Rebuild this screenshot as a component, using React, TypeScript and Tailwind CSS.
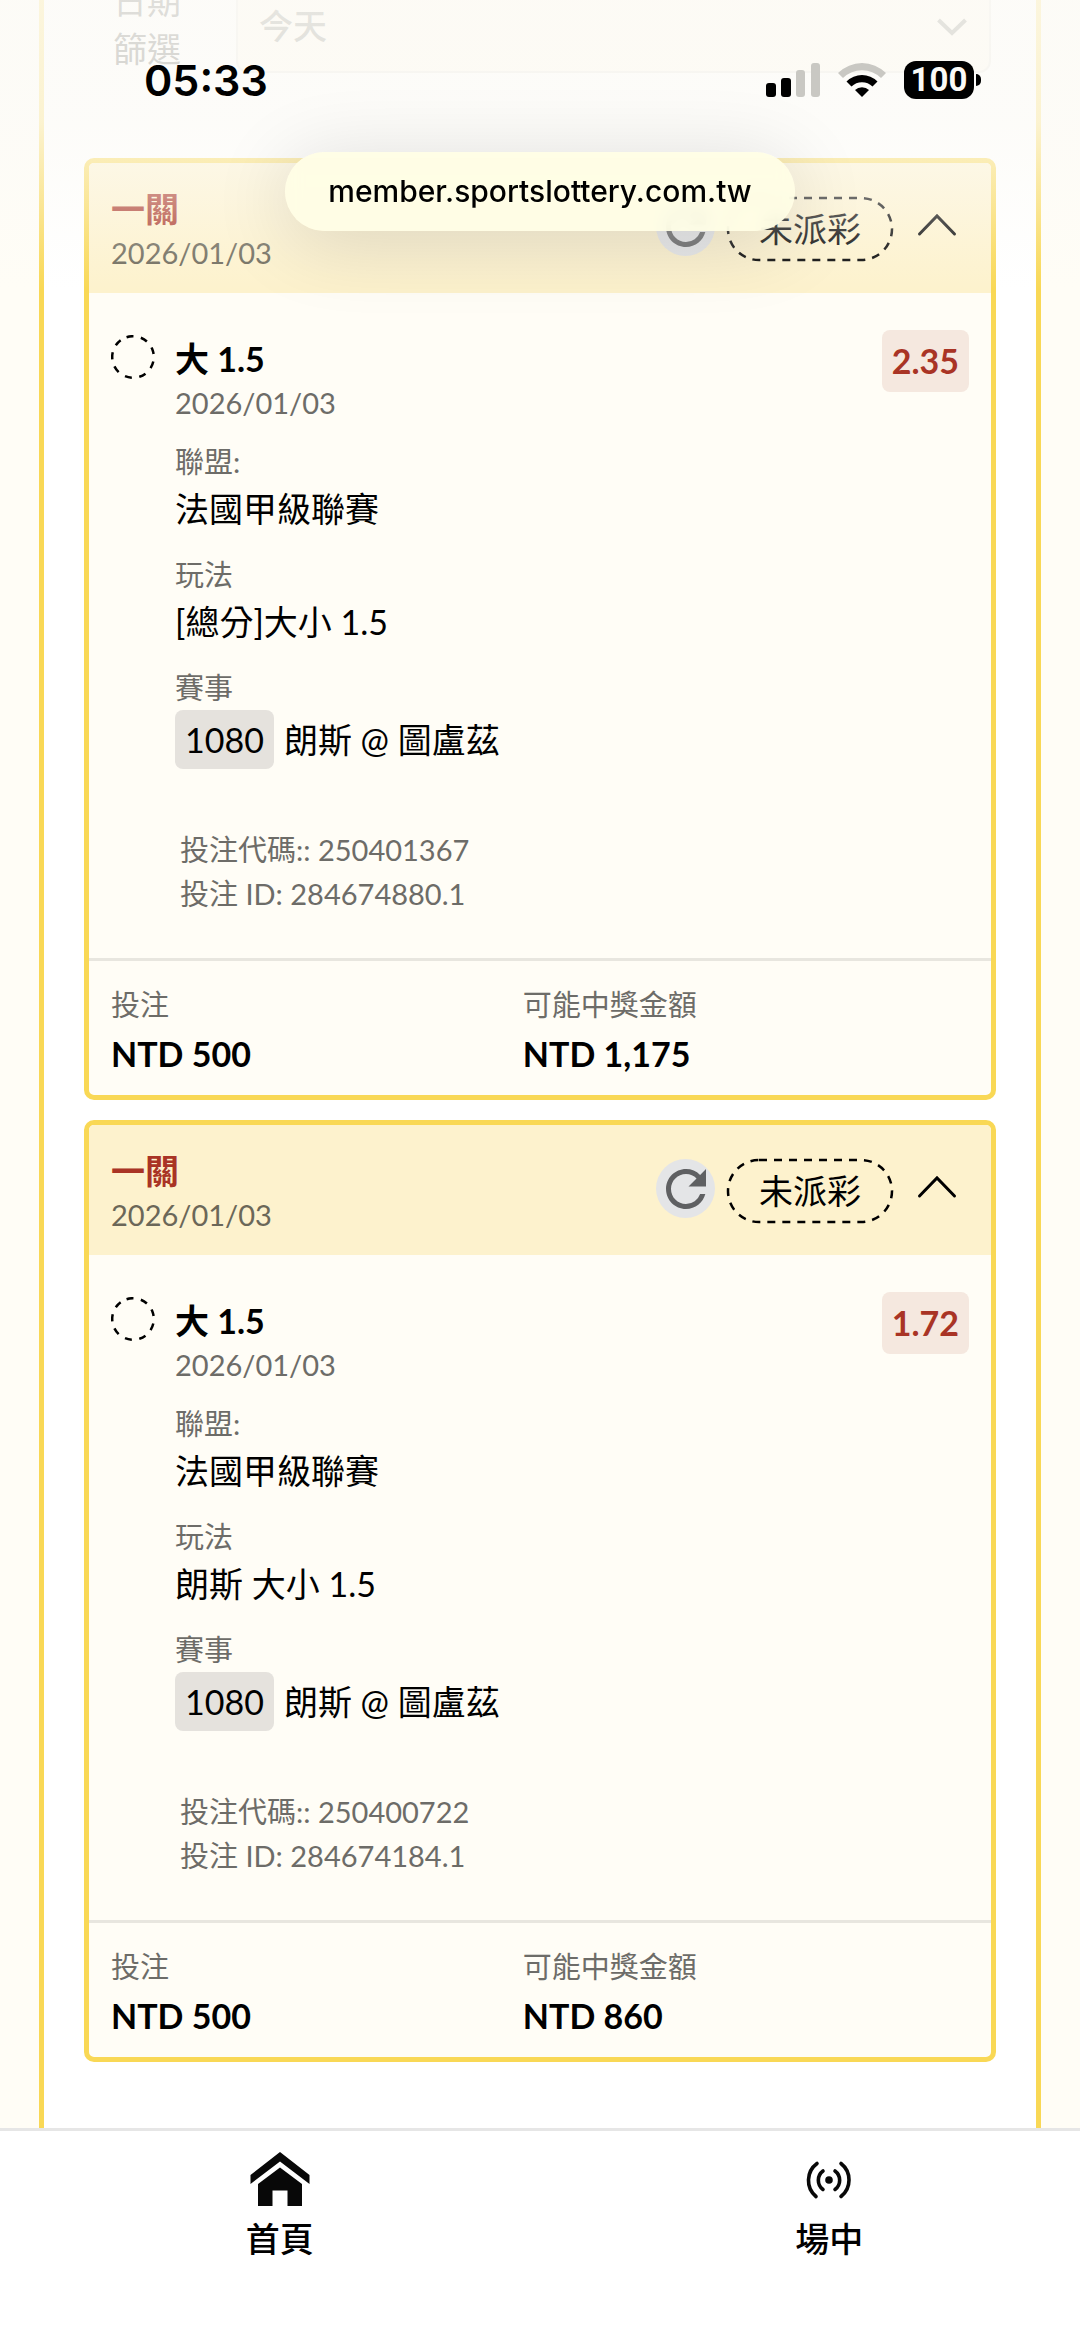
import { useState, type ReactNode } from 'react'
import { MdRefresh } from 'react-icons/md'

interface Bet {
  title: string
  date: string
  status: string
  selection: string
  odds: string
  league: string
  market: string
  matchNo: string
  match: string
  code: string
  id: string
  stake: string
  payout: string
}

const bets: Bet[] = [
  {
    title: '一關',
    date: '2026/01/03',
    status: '未派彩',
    selection: '大 1.5',
    odds: '2.35',
    league: '法國甲級聯賽',
    market: '[總分]大小 1.5',
    matchNo: '1080',
    match: '朗斯 @ 圖盧茲',
    code: '250401367',
    id: '284674880.1',
    stake: 'NTD 500',
    payout: 'NTD 1,175',
  },
  {
    title: '一關',
    date: '2026/01/03',
    status: '未派彩',
    selection: '大 1.5',
    odds: '1.72',
    league: '法國甲級聯賽',
    market: '朗斯 大小 1.5',
    matchNo: '1080',
    match: '朗斯 @ 圖盧茲',
    code: '250400722',
    id: '284674184.1',
    stake: 'NTD 500',
    payout: 'NTD 860',
  },
]

// Phone status bar, drawn over content that fades out towards the top
const StatusBar = () => (
  <div className="pointer-events-none absolute inset-x-0 top-0 h-[290px] bg-[linear-gradient(180deg,rgba(252,251,247,0.84)_0%,rgba(252,251,247,0.76)_42%,rgba(252,251,247,0.6)_55%,rgba(252,251,247,0.38)_72%,rgba(252,251,247,0.18)_86%,rgba(252,251,247,0)_100%)]">
    <div className="flex items-center justify-between pt-[54px] pr-[99px] pl-36 font-['Inter',sans-serif]">
      <span className="text-[43px] leading-[52px] font-semibold text-black">05:33</span>
      <div className="flex items-center gap-[18px]">
        <svg className="h-[34px] w-[54px]" viewBox="0 0 54 34">
          <rect x="0" y="20" width="10" height="14" rx="3" />
          <rect x="15" y="15" width="10" height="19" rx="3" />
          <rect x="30" y="7" width="9" height="27" rx="3" fill="#c9c8c3" />
          <rect x="45" y="0" width="9" height="34" rx="3" fill="#c9c8c3" />
        </svg>
        <svg className="h-[34px] w-[48px]" viewBox="0 0 48 34">
          <path d="M0 10 A34 34 0 0 1 48 10 L43 15 A27 27 0 0 0 5 15 Z" fill="#c9c8c3" />
          <path d="M8.5 18.5 A22 22 0 0 1 39.5 18.5 L34.5 23.5 A15 15 0 0 0 13.5 23.5 Z" />
          <path d="M17 27 A10 10 0 0 1 31 27 L24 34 Z" />
        </svg>
        <div className="flex items-center gap-[2px]">
          <div className="flex h-[38px] w-[70px] items-center justify-center rounded-xl bg-black font-['Roboto',sans-serif] text-[33px] font-bold text-[#fbfaf6]">
            100
          </div>
          <div className="h-3 w-[5px] rounded-r-full bg-black" />
        </div>
      </div>
    </div>
  </div>
)

const AddressPill = () => (
  <div className="absolute inset-x-0 top-[152px] flex justify-center">
    <div className="flex h-[79px] items-center rounded-full bg-[#fffee6]/90 px-[43px] font-['Inter',sans-serif] text-[30px] font-medium text-black shadow-[0_10px_80px_rgba(0,0,0,0.14)] backdrop-blur-sm">
      member.sportslottery.com.tw
    </div>
  </div>
)

const DateFilter = () => (
  <div className="-mt-[23px] flex items-center pr-[45px] pl-[69px]">
    <label htmlFor="date-filter" className="w-[123px] text-[34px] leading-[48px] text-[#4b4b46]">
      日期
      <br />
      篩選
    </label>
    <div className="relative flex-1">
      <select
        id="date-filter"
        className="h-24 w-full appearance-none rounded-xl border-2 border-[#e6e3dc] bg-[#fff9ec] px-[21px] text-[34px] font-medium text-[#77776c]"
      >
        <option>今天</option>
      </select>
      <svg
        className="pointer-events-none absolute top-[41px] right-6 h-[18px] w-[30px]"
        viewBox="0 0 30 18"
        fill="none"
        stroke="#77776c"
        strokeWidth="4"
      >
        <path d="M1.5 2 L15 15 L28.5 2" />
      </svg>
    </div>
  </div>
)

const Field = ({ label, children }: { label: string; children: ReactNode }) => (
  <div>
    <dt className="text-[29px] leading-[44px] text-[#6d6c68]">{label}</dt>
    <dd className="text-[34px] leading-[50px] text-black">{children}</dd>
  </div>
)

const BetCard = ({ bet }: { bet: Bet }) => {
  const [open, setOpen] = useState(true)

  return (
    <article className="overflow-hidden rounded-[10px] border-[5px] border-[#f9d855] bg-[#fffdf6]">
      <header className="flex items-start justify-between bg-[#fdf2cd] pt-6 pr-[34px] pb-[18px] pl-[22px]">
        <div className="leading-[44px]">
          <h2 className="text-[34px] font-bold text-[#a93425]">{bet.title}</h2>
          <p className="text-[29px] text-[#6b6758]">{bet.date}</p>
        </div>
        <div className="flex items-start pt-[10px]">
          <button
            type="button"
            aria-label="重新整理"
            className="flex size-[59px] items-center justify-center rounded-full bg-[#e4e5e7] text-[#5f6062]"
          >
            <MdRefresh className="size-[60px] shrink-0" />
          </button>
          <span className="relative ml-3 px-8 text-[34px] leading-[64px] text-black">
            <svg className="absolute inset-0 h-full w-full overflow-visible" fill="none">
              <rect
                x="1"
                y="1"
                width="98.8%"
                height="97%"
                rx="31"
                stroke="#000"
                strokeWidth="2.5"
                strokeDasharray="8 7"
              />
            </svg>
            {bet.status}
          </span>
          <button
            type="button"
            aria-expanded={open}
            aria-label="展開"
            onClick={() => setOpen(!open)}
            className="mt-4 ml-6"
          >
            <svg
              className={open ? 'h-6 w-10' : 'h-6 w-10 rotate-180'}
              viewBox="0 0 40 24"
              fill="none"
              stroke="#000"
              strokeWidth="3"
              strokeLinecap="round"
            >
              <path d="M2.5 21 L20 3 L37.5 21" />
            </svg>
          </button>
        </div>
      </header>

      {open && (
        <div className="flex items-start px-[22px] pt-[37px] pb-[42px]">
          <svg className="mt-[5px] mr-5 size-11 shrink-0" viewBox="0 0 44 44" fill="none">
            <circle
              cx="22"
              cy="22"
              r="20.8"
              stroke="#000"
              strokeWidth="2.5"
              strokeDasharray="7 7.52"
              transform="rotate(-108 22 22)"
            />
          </svg>
          <div className="flex-1 pt-[7px]">
            <h3 className="text-[34px] leading-[44px] font-bold text-black">{bet.selection}</h3>
            <p className="text-[29px] leading-[44px] text-[#6d6c68]">{bet.date}</p>
            <dl className="mt-[15px] flex flex-col gap-[19px]">
              <Field label="聯盟:">{bet.league}</Field>
              <Field label="玩法">{bet.market}</Field>
              <Field label="賽事">
                <span className="flex items-center gap-[10px]">
                  <span className="rounded-lg bg-[#e5e2dd] px-[10px] leading-[59px]">{bet.matchNo}</span>
                  {bet.match}
                </span>
              </Field>
            </dl>
            <div className="mt-[59px] pl-[5px] text-[29px] leading-[44px] text-[#6d6c68]">
              <p>投注代碼:: {bet.code}</p>
              <p>投注 ID: {bet.id}</p>
            </div>
          </div>
          <span className="rounded-lg bg-[#f5e8df] px-[10px] text-[34px] leading-[62px] font-bold text-[#a93425]">
            {bet.odds}
          </span>
        </div>
      )}

      <footer className="grid grid-cols-[48%_52%] border-t-[3px] border-[#e8e6df] px-[22px] pt-[22px] pb-[14px]">
        <div>
          <p className="text-[29px] leading-[44px] text-[#6d6c68]">投注</p>
          <p className="text-[34px] leading-[54px] font-bold text-black">{bet.stake}</p>
        </div>
        <div>
          <p className="text-[29px] leading-[44px] text-[#6d6c68]">可能中獎金額</p>
          <p className="text-[34px] leading-[54px] font-bold text-black">{bet.payout}</p>
        </div>
      </footer>
    </article>
  )
}

const BottomNav = () => (
  <nav className="overflow-hidden border-t-[3px] border-[#e6e6e6] bg-white">
    <div className="-mr-6 ml-[5px] grid h-[216px] grid-cols-2 text-[34px] leading-[50px] font-medium text-black">
      <a href="#home" className="flex flex-col items-center pt-[21px]">
        <svg className="h-[54px] w-[60px]" viewBox="0 0 60 54" fill="#080808">
          <path d="M30 0 L59.5 23 V32 L30 9.5 L0.5 32 V23 Z" />
          <path d="M30 15.5 L52 32 V54 H37.5 V38.5 H22.5 V54 H8 V32 Z" />
        </svg>
        <span className="mt-2">首頁</span>
      </a>
      <a href="#live" className="flex flex-col items-center pt-[21px]">
        <svg
          className="h-[54px] w-[60px]"
          viewBox="0 0 60 54"
          fill="none"
          stroke="#080808"
          strokeWidth="3.6"
          strokeLinecap="round"
        >
          <circle cx="30" cy="28" r="3.8" fill="#080808" stroke="none" />
          <path d="M24 19 A11.5 11.5 0 0 0 24 37.5" />
          <path d="M36 19 A11.5 11.5 0 0 1 36 37.5" />
          <path d="M18 11.5 A21 21 0 0 0 17 44.5" />
          <path d="M42 11.5 A21 21 0 0 1 42 44.5" />
        </svg>
        <span className="mt-2">場中</span>
      </a>
    </div>
  </nav>
)

const App = () => (
  <div className="relative flex min-h-screen flex-col overflow-hidden bg-[#fffdf6] font-['Lato','Noto_Sans_CJK_TC',sans-serif]">
    <main className="mx-[39px] flex-1 border-x-[5px] border-[#f9d855] bg-white">
      <DateFilter />
      <div className="mt-[85px] flex flex-col gap-5 px-10 pb-[65px]">
        {bets.map((bet) => (
          <BetCard key={bet.id} bet={bet} />
        ))}
      </div>
    </main>
    <BottomNav />
    <StatusBar />
    <AddressPill />
  </div>
)

export default App
